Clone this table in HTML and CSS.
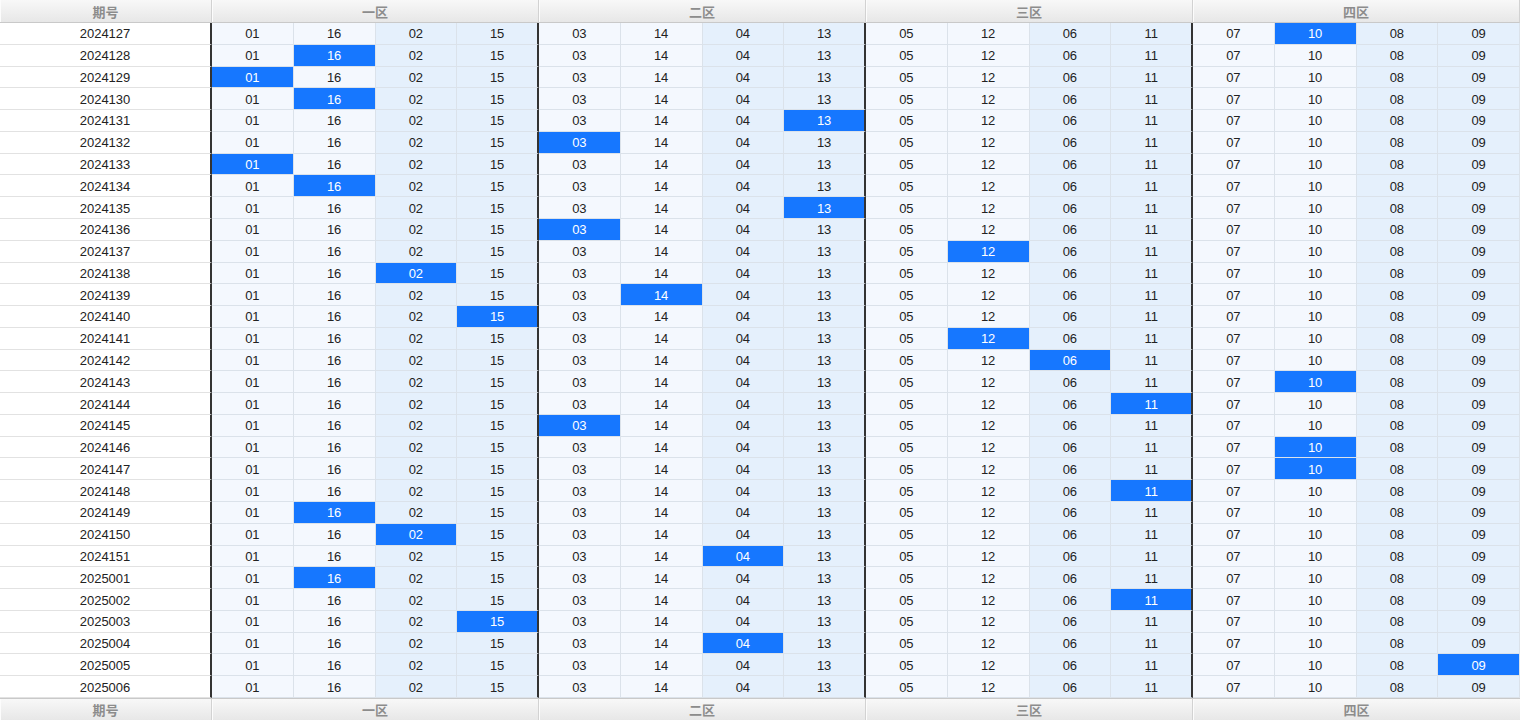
FILE: index.html
```html
<!DOCTYPE html>
<html lang="zh">
<head>
  <meta charset="UTF-8">
  <title>分区走势</title>
  <link rel="stylesheet" href="styles.css">
</head>
<body>

<div class="trend" id="trend"></div>

<script>
  const zones = [
    { name: '一区', nums: ['01', '16', '02', '15'] },
    { name: '二区', nums: ['03', '14', '04', '13'] },
    { name: '三区', nums: ['05', '12', '06', '11'] },
    { name: '四区', nums: ['07', '10', '08', '09'] }
  ];

  // period -> index of the drawn number (0..15), -1 = none
  const draws = [
    ['2024127', 13], ['2024128', 1], ['2024129', 0], ['2024130', 1],
    ['2024131', 7], ['2024132', 4], ['2024133', 0], ['2024134', 1],
    ['2024135', 7], ['2024136', 4], ['2024137', 9], ['2024138', 2],
    ['2024139', 5], ['2024140', 3], ['2024141', 9], ['2024142', 10],
    ['2024143', 13], ['2024144', 11], ['2024145', 4], ['2024146', 13],
    ['2024147', 13], ['2024148', 11], ['2024149', 1], ['2024150', 2],
    ['2024151', 6], ['2025001', 1], ['2025002', 11], ['2025003', 3],
    ['2025004', 6], ['2025005', 15], ['2025006', -1]
  ];

  const trend = document.getElementById('trend');

  function addHead(cls) {
    let html = `<div class="head ${cls} period-head">期号</div>`;
    zones.forEach(z => {
      html += `<div class="head ${cls} zone-head">${z.name}</div>`;
    });
    trend.insertAdjacentHTML('beforeend', html);
  }

  addHead('top');

  draws.forEach(([period, hit]) => {
    let html = `<div class="cell period">${period}</div>`;
    zones.forEach((z, zi) => {
      z.nums.forEach((n, ni) => {
        const idx = zi * 4 + ni;
        let cls = 'cell ' + (ni < 2 ? 'light' : 'shade');
        if (ni === 3 && zi < zones.length - 1) cls += ' zone-end';
        if (idx === hit) cls += ' hit';
        html += `<div class="${cls}">${n}</div>`;
      });
    });
    trend.insertAdjacentHTML('beforeend', html);
  });

  addHead('bottom');
</script>

</body>
</html>
```

FILE: styles.css
```css
html, body {
  margin: 0;
  padding: 0;
  background: #fff;
}

body {
  font-family: "Liberation Sans", Arial, "Noto Sans CJK SC", sans-serif;
  font-size: 13px;
  color: #222;
}

.trend {
  display: grid;
  grid-template-columns: 212px repeat(16, 1fr);
  grid-template-rows: 23px repeat(31, 1fr) 22px;
  width: 1520px;
  height: 720px;
}

.head {
  display: flex;
  align-items: center;
  justify-content: center;
  background: linear-gradient(#f8f8f8, #e7e7e7);
  color: #8c8c8c;
  font-weight: bold;
  font-size: 13px;
  border-right: 1px solid #d2d2d2;
  box-shadow: inset 1px 0 0 #fcfcfc;
  box-sizing: border-box;
}

.head.top {
  border-bottom: 1px solid #c9c9c9;
}

.head.bottom {
  border-top: 1px solid #c9c9c9;
}

.zone-head {
  grid-column: span 4;
}

.zone-head:last-child {
  border-right: none;
}

.cell {
  display: flex;
  align-items: center;
  justify-content: center;
  box-sizing: border-box;
  border-right: 1px solid #dbe2ea;
  border-bottom: 1px solid #dbe2ea;
  padding-top: 1px;
}

.period {
  background: #fff;
  border-right: 2px solid #333;
  border-bottom-color: #e2e2e2;
}

.light {
  background: #f4f8fe;
}

.shade {
  background: #e5f0fc;
}

.zone-end {
  border-right: 2px solid #333;
}

.hit {
  background: #1677ff;
  color: #fff;
}
```
